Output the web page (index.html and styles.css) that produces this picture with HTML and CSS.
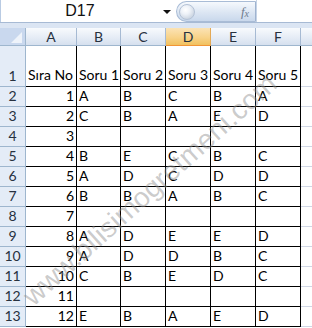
FILE: index.html
```html
<!DOCTYPE html>
<html>
<head>
<meta charset="utf-8">
<link rel="stylesheet" href="styles.css">
</head>
<body>
<div class="app">
  <div class="fbar">
    <div class="namebox"><span class="ref">D17</span><span class="arrow"></span></div>
    <div class="fxbtn"><span class="bubble"></span><span class="fx">f<sub>x</sub></span></div>
    <div class="formula"></div>
  </div>
  <div class="strip"></div>
  <div class="sheet">
    <div class="corner"></div>
    <div class="ch">A</div><div class="ch">B</div><div class="ch">C</div><div class="ch sel">D</div><div class="ch">E</div><div class="ch">F</div><div class="ch last"></div>

    <div class="rh tall">1</div>
    <div class="c tall">Sıra No</div><div class="c tall">Soru 1</div><div class="c tall">Soru 2</div><div class="c tall">Soru 3</div><div class="c tall">Soru 4</div><div class="c tall">Soru 5</div><div class="g tall"></div>

    <div class="rh">2</div><div class="c n">1</div><div class="c">A</div><div class="c">B</div><div class="c">C</div><div class="c">B</div><div class="c">A</div><div class="g"></div>
    <div class="rh">3</div><div class="c n">2</div><div class="c">C</div><div class="c">B</div><div class="c">A</div><div class="c">E</div><div class="c">D</div><div class="g"></div>
    <div class="rh">4</div><div class="c n">3</div><div class="c"></div><div class="c"></div><div class="c"></div><div class="c"></div><div class="c"></div><div class="g"></div>
    <div class="rh">5</div><div class="c n">4</div><div class="c">B</div><div class="c">E</div><div class="c">C</div><div class="c">B</div><div class="c">C</div><div class="g"></div>
    <div class="rh">6</div><div class="c n">5</div><div class="c">A</div><div class="c">D</div><div class="c">C</div><div class="c">D</div><div class="c">D</div><div class="g"></div>
    <div class="rh">7</div><div class="c n">6</div><div class="c">B</div><div class="c">B</div><div class="c">A</div><div class="c">B</div><div class="c">C</div><div class="g"></div>
    <div class="rh">8</div><div class="c n">7</div><div class="c"></div><div class="c"></div><div class="c"></div><div class="c"></div><div class="c"></div><div class="g"></div>
    <div class="rh">9</div><div class="c n">8</div><div class="c">A</div><div class="c">D</div><div class="c">E</div><div class="c">E</div><div class="c">D</div><div class="g"></div>
    <div class="rh">10</div><div class="c n">9</div><div class="c">A</div><div class="c">D</div><div class="c">D</div><div class="c">B</div><div class="c">C</div><div class="g"></div>
    <div class="rh">11</div><div class="c n">10</div><div class="c">C</div><div class="c">B</div><div class="c">E</div><div class="c">D</div><div class="c">C</div><div class="g"></div>
    <div class="rh">12</div><div class="c n">11</div><div class="c"></div><div class="c"></div><div class="c"></div><div class="c"></div><div class="c"></div><div class="g"></div>
    <div class="rh">13</div><div class="c n">12</div><div class="c">E</div><div class="c">B</div><div class="c">A</div><div class="c">E</div><div class="c">D</div><div class="g"></div>
  </div>
  <div class="watermark">www.bilisimogretmeni.com</div>
</div>
</body>
</html>
```
FILE: styles.css
```css
html, body {
  margin: 0;
  padding: 0;
  background: #ffffff;
}
.app {
  position: relative;
  width: 312px;
  height: 328px;
  overflow: hidden;
  font-family: Lato, "Open Sans", sans-serif;
  color: #000;
}
.fbar {
  display: flex;
  height: 23px;
  box-sizing: border-box;
  border-bottom: 1px solid #a7bad4;
  background: #ffffff;
}
.namebox {
  width: 176px;
  box-sizing: border-box;
  border-left: 1px solid #b9cbe3;
  display: flex;
  align-items: center;
  position: relative;
}
.ref {
  flex: 1;
  text-align: center;
  font-size: 16px;
  font-family: "Liberation Sans", Arial, sans-serif;
  color: #111;
  padding-right: 4px;
}
.arrow {
  width: 0;
  height: 0;
  border-left: 4px solid transparent;
  border-right: 4px solid transparent;
  border-top: 4px solid #111;
  margin-right: 5px;
  margin-top: 1px;
}
.fxbtn {
  width: 80px;
  height: 21px;
  margin-top: 1px;
  box-sizing: border-box;
  border: 1px solid #a9bcd6;
  border-right: 1px solid #9fb3cf;
  border-radius: 11px 0 0 11px;
  background: linear-gradient(#f6f9fd, #dce6f3 55%, #c9d8ec);
  display: flex;
  align-items: center;
  justify-content: space-between;
  padding: 0 6px 0 2px;
}
.bubble {
  width: 16px;
  height: 16px;
  border-radius: 50%;
  background: radial-gradient(circle at 40% 35%, #ffffff 0, #eef2f8 35%, #b6c3d4 100%);
  border: 1px solid #b4c2d6;
  box-sizing: border-box;
}
.fx {
  font-family: "Liberation Serif", "DejaVu Serif", serif;
  font-style: italic;
  font-size: 13px;
  color: #6f7b8c;
  line-height: 1;
}
.fx sub {
  font-size: 10px;
  vertical-align: -1px;
}
.formula {
  flex: 1;
  background: #fff;
  border-left: 1px solid #c5d3e6;
}
.strip {
  height: 5px;
  background: #dbe5f3;
}
.sheet {
  display: grid;
  grid-template-columns: 26px 51px 44px 45px 45px 45px 45px 11px;
  grid-template-rows: 18px 41px;
  grid-auto-rows: 20px;
  font-size: 14px;
}
.corner {
  background: #c9d8ee;
  border-right: 1px solid #9eb6ce;
  border-bottom: 1px solid #9eb6ce;
  box-sizing: border-box;
  position: relative;
}
.corner::after {
  content: "";
  position: absolute;
  right: 3px;
  bottom: 2px;
  width: 0;
  height: 0;
  border-left: 11px solid transparent;
  border-bottom: 11px solid #eef3fa;
}
.ch {
  box-sizing: border-box;
  background: linear-gradient(#f8fafd, #e4ebf5 60%, #d6e0ee);
  border-right: 1px solid #a6bad3;
  border-bottom: 1px solid #9eb6ce;
  text-align: center;
  font-size: 14px;
  line-height: 17px;
  color: #27313f;
}
.ch.sel {
  background: linear-gradient(#fbe3b5, #f8d38a 55%, #f1c15f);
  border-right-color: #e3a956;
  border-bottom-color: #f29536;
}
.ch.last {
  border-right: none;
}
.rh {
  box-sizing: border-box;
  background: #e4ecf7;
  border-right: 1px solid #9eb6ce;
  border-bottom: 1px solid #9eb6ce;
  text-align: center;
  color: #27313f;
  display: flex;
  align-items: flex-end;
  justify-content: center;
  padding-bottom: 2px;
}
.c {
  box-sizing: border-box;
  border-right: 1px solid #000;
  border-bottom: 1px solid #000;
  display: flex;
  align-items: flex-end;
  padding: 0 0 2px 2px;
  white-space: nowrap;
  overflow: visible;
}
.c.n {
  justify-content: flex-end;
  padding: 0 2px 2px 0;
}
.c.tall {
  padding-bottom: 3px;
}
.g {
  box-sizing: border-box;
  border-bottom: 1px solid #d0d7e5;
}
.watermark {
  position: absolute;
  left: 150px;
  top: 190px;
  transform: translate(-50%, -50%) rotate(-42deg);
  font-family: "Liberation Sans", Arial, sans-serif;
  font-size: 28px;
  color: rgba(140, 140, 140, 0.45);
  white-space: nowrap;
  pointer-events: none;
}
```
